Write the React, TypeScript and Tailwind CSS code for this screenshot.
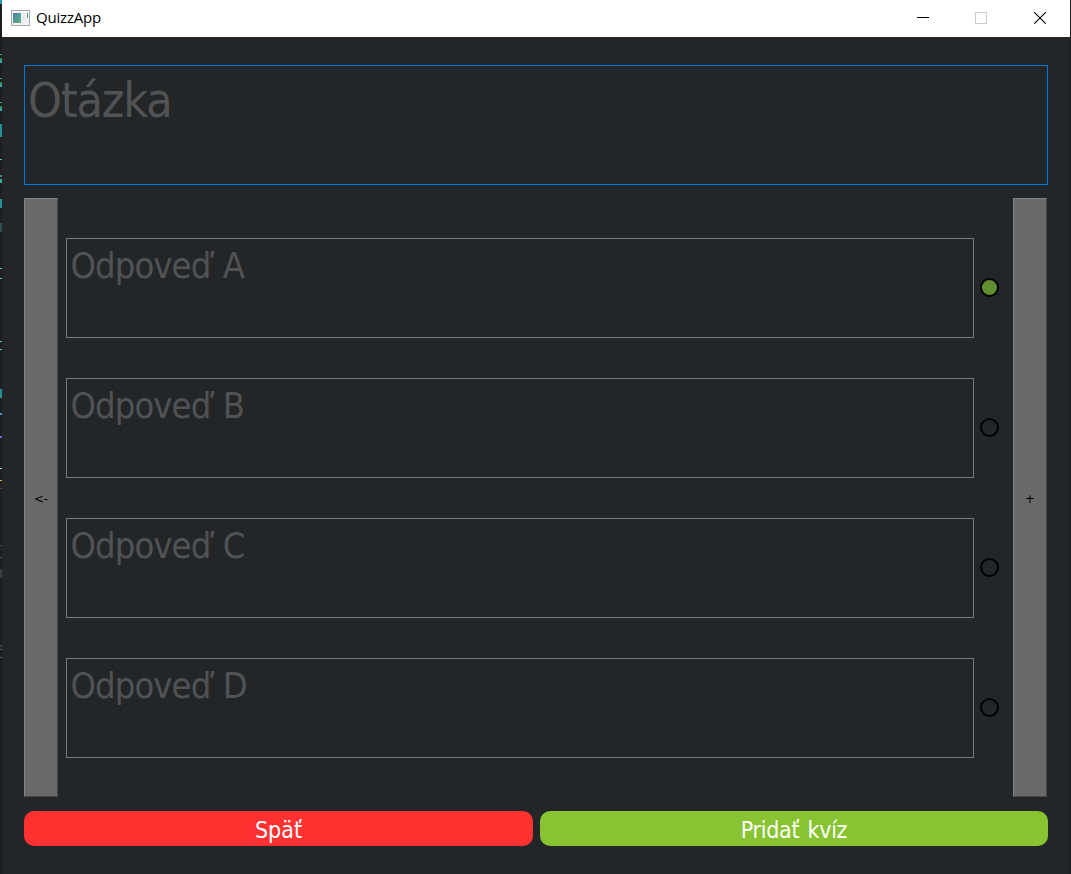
import { useState } from "react";

const answers = ["A", "B", "C", "D"];

// Slivers of the editor window that lies behind the left edge: [y, height, colour]
const slivers: [number, number, string][] = [
  [0, 4, "#2b91c0"],
  [54, 1, "#3f9f8a"], [58, 2, "#3b8a4a"], [60, 3, "#35a79c"],
  [78, 1, "#3f9f8a"], [82, 2, "#3b8a4a"], [84, 3, "#35a79c"],
  [102, 1, "#3f9f8a"], [106, 2, "#3b8a4a"], [108, 3, "#35a79c"],
  [124, 13, "#239296"], [159, 1, "#4ec9b0"],
  [175, 2, "#3b8a6a"], [179, 4, "#35a79c"],
  [199, 9, "#239296"], [223, 9, "#2c4f50"],
  [268, 1, "#4ec9b0"], [278, 1, "#4ec9b0"],
  [341, 1, "#4ec9b0"], [349, 1, "#4ec9b0"],
  [389, 9, "#239296"], [413, 2, "#3b8fd0"], [436, 2, "#6a6fe0"],
  [468, 1, "#9cdcfe"], [480, 1, "#d7ba7d"], [488, 1, "#444444"],
  [545, 1, "#444444"], [557, 1, "#555555"], [569, 9, "#3d3d3d"],
  [645, 2, "#444444"], [649, 1, "#666666"], [657, 1, "#666666"],
];

function TitleBar() {
  return (
    <header className="flex h-[37px] shrink-0 items-center bg-white pl-[9px]">
      <svg width="19" height="16" viewBox="0 0 19 16" shapeRendering="crispEdges" className="mb-px">
        <defs>
          <linearGradient id="pane" x1="0" y1="0" x2="1" y2="1">
            <stop offset="0" stopColor="#4580ad" />
            <stop offset="1" stopColor="#62b47c" />
          </linearGradient>
        </defs>
        <rect x="0.5" y="0.5" width="18" height="15" fill="#f4f5f6" stroke="#a0a7ae" />
        <rect x="2" y="3" width="8" height="10" fill="url(#pane)" />
        <rect x="11" y="3" width="4" height="10" fill="#e9ebee" />
        <rect x="16" y="3" width="1" height="5" fill="#4d97a0" />
      </svg>
      <h1 className="mb-[3px] ml-[6px] flex-1 font-['Open_Sans','Noto_Sans',sans-serif] text-[15px] leading-[20px] tracking-[-0.2px] text-black [font-stretch:normal]">
        QuizzApp
      </h1>
      <div className="flex h-full items-center">
        <button aria-label="Minimize" className="flex h-full w-[58px] items-center justify-center pb-px">
          <svg width="12" height="12" shapeRendering="crispEdges"><path d="M0 5.5H12" stroke="#000" /></svg>
        </button>
        <button aria-label="Maximize" disabled className="flex h-full w-[58px] items-center justify-center pb-px">
          <svg width="12" height="12" shapeRendering="crispEdges"><rect x="0.5" y="0.5" width="11" height="11" fill="none" stroke="#ccc" /></svg>
        </button>
        <button aria-label="Close" className="flex h-full w-[60px] items-center justify-center pb-px">
          <svg width="12" height="12"><path d="M0.3 0.3L11.7 11.7M11.7 0.3L0.3 11.7" stroke="#000" strokeWidth="1.1" /></svg>
        </button>
      </div>
    </header>
  );
}

function SideButton({ label }: { label: string }) {
  return (
    <button className="flex w-[34px] shrink-0 items-center justify-center border border-t-[#828282] border-r-[#484848] border-b-[#484848] border-l-[#828282] bg-[#696969] pt-0.5 text-[13px] leading-4 text-black">
      {label}
    </button>
  );
}

export default function App() {
  const [correct, setCorrect] = useState(0);
  return (
    <div className="flex h-[874px] w-[1071px] overflow-hidden bg-[#1e1e1e] font-['DejaVu_Sans_Condensed','DejaVu_Sans',sans-serif] [font-stretch:condensed]">
      <svg width="2" height="874" className="shrink-0" shapeRendering="crispEdges">
        {slivers.map(([y, h, fill]) => (
          <rect key={y} x="0" y={y} width="2" height={h} fill={fill} />
        ))}
      </svg>
      <div className="flex w-[1068px] flex-col bg-[#232629]">
        <TitleBar />
        <main className="flex flex-col pt-7 pr-[22px] pl-[22px]">
          <div className="h-[120px] w-[1024px] border border-[#0078d7] pl-[3px] text-[48px] leading-[68px] tracking-[-1.2px] text-[#505254]">
            Otázka
          </div>
          <div className="mt-[13px] flex h-[599px] w-[1023px]">
            <SideButton label="<-" />
            <div className="ml-2 flex flex-1 flex-col gap-10 pt-10">
              {answers.map((letter, i) => (
                <div key={letter} className="flex h-[100px] items-center">
                  <div className="h-full w-[908px] border border-[#7a7a7a] pt-px pl-[3.5px] text-[36px] leading-[52px] tracking-[-0.9px] text-[#505254] [word-spacing:3px]">
                    Odpoveď {letter}
                  </div>
                  <button
                    aria-label={`Odpoveď ${letter}`}
                    onClick={() => setCorrect(i)}
                    className={`mb-px ml-[6px] size-[19px] rounded-full border-2 border-black ${i === correct ? "bg-[#628f30]" : ""}`}
                  />
                </div>
              ))}
            </div>
            <SideButton label="+" />
          </div>
          <div className="mt-[14px] flex h-[35px] w-[1024px] gap-[7px] text-[23px] leading-[35px] text-white">
            <button className="w-[509px] rounded-[10px] bg-[#ff3131] pt-[2px]">Späť</button>
            <button className="w-[508px] rounded-[10px] bg-[#88c431] pt-[2px] tracking-[-0.3px] [word-spacing:2px]">Pridať kvíz</button>
          </div>
        </main>
      </div>
    </div>
  );
}
